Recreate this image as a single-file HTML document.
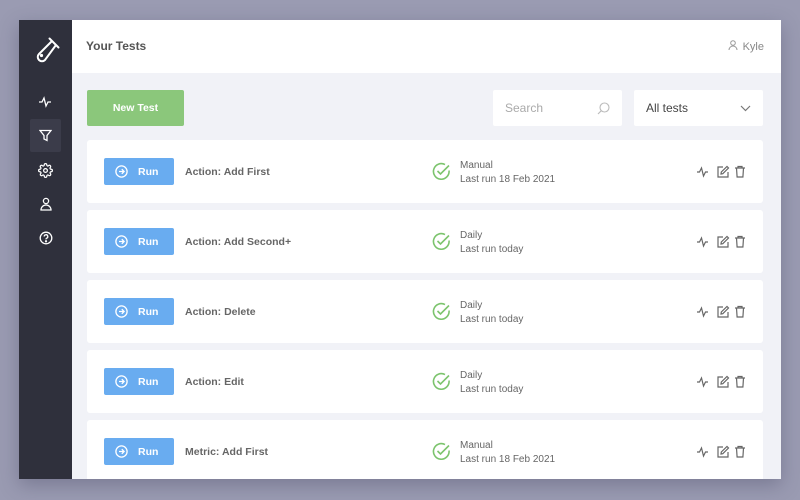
<!DOCTYPE html><html><head><style>
*{margin:0;padding:0;box-sizing:border-box}
body{width:800px;height:500px;background:#9a9bb2;position:relative;overflow:hidden;font-family:"Liberation Sans",sans-serif}
.app{position:absolute;left:19px;top:20px;width:762px;height:459px;background:#f1f2f7;overflow:hidden;box-shadow:0 6px 18px rgba(60,60,90,.35)}
.side{position:absolute;left:0;top:0;width:53px;height:459px;background:#2f303c}
.hdr{position:absolute;left:53px;top:0;right:0;height:53px;background:#fff}
.t{position:absolute;left:14px;top:19px;font-size:12px;font-weight:bold;color:#555}
.kyle{position:absolute;right:17px;top:20px;font-size:11px;color:#888}
.ab{position:absolute}
.new{left:68px;top:70px;width:97px;height:36px;background:#8bc77b;border-radius:2px;color:#fff;font-size:10.5px;font-weight:bold;text-align:center;line-height:37px}
.box{top:70px;height:36px;background:#fff;border-radius:2px;font-size:12px;line-height:36px}
.row{position:absolute;left:68px;width:676px;height:63px;background:#fff;border-radius:3px}
.run{position:absolute;left:17px;top:18px;width:70px;height:27px;background:#69acf0;border-radius:2px;color:#fff;font-size:10.5px;font-weight:bold;line-height:29px;padding-left:34px}
.run svg{position:absolute;left:11px;top:7px}
.nm{position:absolute;left:98px;top:26px;font-size:10.5px;font-weight:bold;color:#666}
.ck{position:absolute;left:345px;top:22px}
.st{position:absolute;left:373px;top:19px;font-size:10px;color:#666;line-height:14px}
.ic{position:absolute;left:609px;top:25px}
.si{position:absolute;left:18px}
</style></head><body><div class="app">
<div class="side">
<svg class="si" style="left:13px;top:15px" width="30" height="30" viewBox="0 0 30 30" fill="none" stroke="#fff" stroke-width="2" stroke-linecap="round"><path d="M17.5 3.5l9 9M20 6L7 19a4.24 4.24 0 0 0 6 6L24 10"/><circle cx="9.5" cy="20.5" r="1.6" fill="#fff" stroke="none"/></svg>
<svg class="si" style="left:19px;top:75px" width="14" height="14" viewBox="0 0 14 14" fill="none" stroke="#fff" stroke-width="1.3"><path d="M1 7h3l2-4 2 8 2-4h3"/></svg>
<div style="position:absolute;left:11px;top:99px;width:31px;height:33px;background:#3b3c4a;border-radius:2px"></div>
<svg class="si" style="left:20px;top:109px" width="13" height="13" viewBox="0 0 13 13" fill="none" stroke="#fff" stroke-width="1.3"><path d="M1 1.5h11L8 6.5v5l-3-1.5V6.5z"/></svg>
<svg class="si" style="left:19px;top:143px" width="15" height="15" viewBox="0 0 24 24" fill="none" stroke="#fff" stroke-width="2"><circle cx="12" cy="12" r="3"/><path d="M19.4 15a1.65 1.65 0 0 0 .33 1.82l.06.06a2 2 0 1 1-2.83 2.83l-.06-.06a1.65 1.65 0 0 0-1.82-.33 1.65 1.65 0 0 0-1 1.51V21a2 2 0 1 1-4 0v-.09A1.65 1.65 0 0 0 9 19.4a1.65 1.65 0 0 0-1.82.33l-.06.06a2 2 0 1 1-2.83-2.83l.06-.06a1.65 1.65 0 0 0 .33-1.82 1.65 1.65 0 0 0-1.51-1H3a2 2 0 1 1 0-4h.09A1.65 1.65 0 0 0 4.6 9a1.65 1.65 0 0 0-.33-1.82l-.06-.06a2 2 0 1 1 2.83-2.83l.06.06a1.65 1.65 0 0 0 1.82.33H9a1.65 1.65 0 0 0 1-1.51V3a2 2 0 1 1 4 0v.09a1.65 1.65 0 0 0 1 1.51 1.65 1.65 0 0 0 1.82-.33l.06-.06a2 2 0 1 1 2.83 2.83l-.06.06a1.65 1.65 0 0 0-.33 1.82V9a1.65 1.65 0 0 0 1.51 1H21a2 2 0 1 1 0 4h-.09a1.65 1.65 0 0 0-1.51 1z"/></svg>
<svg class="si" style="left:20px;top:177px" width="14" height="14" viewBox="0 0 14 14" fill="none" stroke="#fff" stroke-width="1.3"><circle cx="7" cy="4" r="2.6"/><path d="M2 13a5 5 0 0 1 10 0z"/></svg>
<svg class="si" style="left:20px;top:211px" width="14" height="14" viewBox="0 0 14 14" fill="none" stroke="#fff" stroke-width="1.3"><circle cx="7" cy="7" r="5.8"/><path d="M5.2 5.5a1.8 1.8 0 1 1 2.4 1.7c-.5.2-.6.6-.6 1.2"/><circle cx="7" cy="10.3" r=".5"/></svg>
</div>
<div class="hdr"><div class="t">Your Tests</div>
<div class="kyle"><svg width="10" height="11" viewBox="0 0 10 11" fill="none" stroke="#999" style="margin-right:5px;vertical-align:-1px"><circle cx="5" cy="3" r="2.3"/><path d="M1 10a4 4 0 0 1 8 0"/></svg>Kyle</div></div>
<div class="ab new">New Test</div>
<div class="ab box" style="left:474px;width:129px;color:#aaa;padding-left:12px">Search<svg style="position:absolute;right:12px;top:12px" width="13" height="13" viewBox="0 0 13 13" fill="none" stroke="#bbb" stroke-width="1.1"><circle cx="7.5" cy="5.5" r="4.5"/><path d="M4.3 8.7L1 12"/></svg></div>
<div class="ab box" style="left:615px;width:129px;color:#444;padding-left:12px">All tests<svg style="position:absolute;right:12px;top:15px" width="11" height="7" viewBox="0 0 11 7" fill="none" stroke="#777" stroke-width="1.2"><path d="M1 1l4.5 4.5L10 1"/></svg></div>
<div id="rows"></div>
</div>
<script>
var d=[["Action: Add First","Manual","Last run 18 Feb 2021"],["Action: Add Second+","Daily","Last run today"],["Action: Delete","Daily","Last run today"],["Action: Edit","Daily","Last run today"],["Metric: Add First","Manual","Last run 18 Feb 2021"]];
var h="";d.forEach(function(r,i){h+='<div class="row" style="top:'+(120+i*70)+'px"><div class="run"><svg width="13" height="13" viewBox="0 0 13 13" fill="none" stroke="#fff" stroke-width="1.3"><circle cx="6.5" cy="6.5" r="5.6"/><path d="M4 6.5h5M6.8 4.2l2.3 2.3-2.3 2.3"/></svg>Run</div><div class="nm">'+r[0]+'</div><svg class="ck" width="19" height="19" viewBox="0 0 19 19" fill="none" stroke="#7cc46d" stroke-width="1.6"><path d="M17 8.5A7.8 7.8 0 1 1 13 2.6"/><path d="M5.5 9l3 3L17 3.5"/></svg><div class="st">'+r[1]+'<br>'+r[2]+'</div><svg class="ic" width="52" height="13" viewBox="0 0 52 13" fill="none" stroke="#666" stroke-width="1.2"><path d="M1 7h2.5l2-4 2 8 2-4H12"/><path d="M27 2h-5v10h10V7"/><path d="M25 9l.3-2L31 1.5l1.5 1.5-5.7 5.7z"/><path d="M39 3h10M42 3V1.5h4V3M40.5 3l.6 9h5.8l.6-9"/></svg></div>'});
document.getElementById("rows").outerHTML=h;
</script>
</body></html>
